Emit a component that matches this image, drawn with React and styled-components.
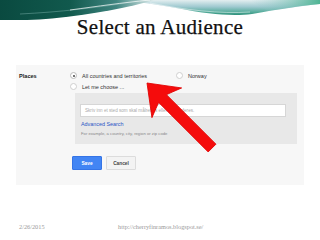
import React from 'react';
import styled, { createGlobalStyle } from 'styled-components';

const GlobalStyle = createGlobalStyle`
  html, body {
    margin: 0;
    padding: 0;
    background: #ffffff;
  }
`;

const Slide = styled.div`
  position: relative;
  width: 320px;
  height: 240px;
  overflow: hidden;
  background: #ffffff;
  display: flex;
  flex-direction: column;
`;

const WaveSvg = styled.svg`
  display: block;
  width: 320px;
  height: 20px;
  flex-shrink: 0;
`;

const Title = styled.h1`
  margin: -3px 0 0;
  font-family: 'Liberation Serif', 'Times New Roman', serif;
  font-weight: normal;
  font-size: 21px;
  line-height: 21px;
  letter-spacing: 0.3px;
  color: #111;
  -webkit-text-stroke: 0.25px #111;
  text-align: center;
`;

const Panel = styled.div`
  margin: 27px 16px 0;
  padding: 8px 7px 15px 3px;
  background: #f7f7f7;
  display: grid;
  grid-template-columns: 51px 1fr;
  font-family: 'Liberation Sans', Arial, sans-serif;
  color: #333;
`;

const Label = styled.div`
  font-size: 5.6px;
  font-weight: bold;
  line-height: 6px;
  color: #222;
`;

const Content = styled.div`
  display: flex;
  flex-direction: column;
`;

const Options = styled.div`
  display: grid;
  grid-template-columns: 106px auto;
  grid-auto-rows: 11px;
  margin-top: -3px;
`;

const Option = styled.label`
  display: flex;
  align-items: center;
  gap: 5px;
  font-size: 5.5px;
  color: #333;
`;

const Radio = styled.span`
  width: 5px;
  height: 5px;
  border-radius: 50%;
  border: 0.6px solid ${(p) => (p.checked ? '#bbb' : '#cfcfcf')};
  background: #fff;
  display: flex;
  align-items: center;
  justify-content: center;

  &::after {
    content: '';
    width: 2px;
    height: 2px;
    border-radius: 50%;
    background: ${(p) => (p.checked ? '#444' : 'transparent')};
  }
`;

const SearchBox = styled.div`
  margin: 1px 0 0 5px;
  padding: 11px 11px 6px 5px;
  background: #e8e8e8;
  display: flex;
  flex-direction: column;
`;

const Field = styled.div`
  height: 13px;
  background: #ffffff;
  border: 0.5px solid #d6d6d6;
  box-sizing: border-box;
  padding-left: 4px;
  display: flex;
  align-items: center;
  font-size: 4.6px;
  color: #aaa;
  white-space: nowrap;
  overflow: hidden;
`;

const LinkText = styled.div`
  margin-top: 3px;
  padding-left: 1px;
  font-size: 5.4px;
  line-height: 8px;
  color: #2a56c6;
`;

const Hint = styled.div`
  margin-top: 2px;
  padding-left: 1px;
  font-size: 4.2px;
  line-height: 8px;
  color: #888;
`;

const Buttons = styled.div`
  display: flex;
  gap: 4px;
  margin: 12px 0 0 2px;
`;

const Button = styled.button`
  width: 30px;
  height: 14px;
  padding: 0;
  border-radius: 1px;
  font-family: 'Liberation Sans', Arial, sans-serif;
  font-size: 4.8px;
  font-weight: bold;
  border: 0.5px solid ${(p) => (p.primary ? '#3574e6' : '#dcdcdc')};
  background: ${(p) => (p.primary ? '#4285f4' : '#f3f3f3')};
  color: ${(p) => (p.primary ? '#ffffff' : '#444')};
`;

const Footer = styled.div`
  margin-top: 38px;
  padding-left: 19px;
  display: flex;
  font-family: 'Liberation Serif', 'Times New Roman', serif;
  font-size: 6.3px;
  line-height: 8px;
  color: #9a9a9a;
`;

const DateText = styled.span`
  width: 99px;
`;

const ArrowSvg = styled.svg`
  position: absolute;
  left: 0;
  top: 0;
  width: 320px;
  height: 240px;
  pointer-events: none;
`;

const Wave = () => (
  <WaveSvg viewBox="0 0 320 20">
    <defs>
      <linearGradient id="darkWave" x1="0" y1="0" x2="1" y2="0">
        <stop offset="0" stopColor="#0a4a40" />
        <stop offset="0.45" stopColor="#11594d" />
        <stop offset="0.75" stopColor="#3f8580" />
        <stop offset="1" stopColor="#e2eeee" />
      </linearGradient>
      <linearGradient id="lightWave" x1="0" y1="0" x2="0" y2="1">
        <stop offset="0" stopColor="#e3eef0" />
        <stop offset="0.45" stopColor="#9fc9d0" />
        <stop offset="0.8" stopColor="#57ad9c" />
        <stop offset="1" stopColor="#2e8f7a" />
      </linearGradient>
      <linearGradient id="rightTip" x1="0" y1="0" x2="1" y2="0">
        <stop offset="0" stopColor="#9fcbd2" stopOpacity="0" />
        <stop offset="1" stopColor="#4fb594" />
      </linearGradient>
    </defs>
    <path d="M120,0 L320,0 L320,4 C300,6 280,9 252,14 C232,16.5 206,14 182,9 C160,5 140,2 120,0 Z" fill="url(#lightWave)" />
    <path d="M250,0 L320,0 L320,4 C300,6 285,8 268,11 C260,7 255,3 250,0 Z" fill="url(#rightTip)" />
    <path d="M0,0 L155,0 C130,7 96,14 52,18.5 C34,20 17,20.5 0,20.5 Z" fill="url(#darkWave)" />
    <path d="M20,14 C60,12 95,8 140,1" stroke="#7fb3ad" strokeWidth="0.8" fill="none" opacity="0.6" />
    <path d="M70,10 C100,6 120,3 150,0" stroke="#ffffff" strokeWidth="1" fill="none" opacity="0.7" />
    <path d="M150,3 C185,10 220,14 250,12" stroke="#ffffff" strokeWidth="0.8" fill="none" opacity="0.6" />
  </WaveSvg>
);

const Arrow = () => (
  <ArrowSvg viewBox="0 0 320 240">
    <g transform="translate(147 83) rotate(45)">
      <path
        d="M0,0 L28,-21 Q24,-11 22,-5.5 L92,-5.5 L92,5.5 L22,5.5 Q24,11 28,21 Z"
        fill="#f50c0c"
        stroke="#e00000"
        strokeWidth="0.8"
        strokeLinejoin="round"
      />
    </g>
  </ArrowSvg>
);

export default function App() {
  return (
    <Slide>
      <GlobalStyle />
      <Wave />
      <Title>Select an Audience</Title>
      <Panel>
        <Label>Places</Label>
        <Content>
          <Options>
            <Option>
              <Radio checked />
              All countries and territories
            </Option>
            <Option>
              <Radio />
              Norway
            </Option>
            <Option>
              <Radio />
              Let me choose ...
            </Option>
          </Options>
          <SearchBox>
            <Field>Skriv inn et sted som skal målrettes eller ekskluderes.</Field>
            <LinkText>Advanced Search</LinkText>
            <Hint>For example, a country, city, region or zip code</Hint>
          </SearchBox>
          <Buttons>
            <Button primary>Save</Button>
            <Button>Cancel</Button>
          </Buttons>
        </Content>
      </Panel>
      <Footer>
        <DateText>2/26/2015</DateText>
        <span>http://cherryfinramos.blogspot.se/</span>
      </Footer>
      <Arrow />
    </Slide>
  );
}
